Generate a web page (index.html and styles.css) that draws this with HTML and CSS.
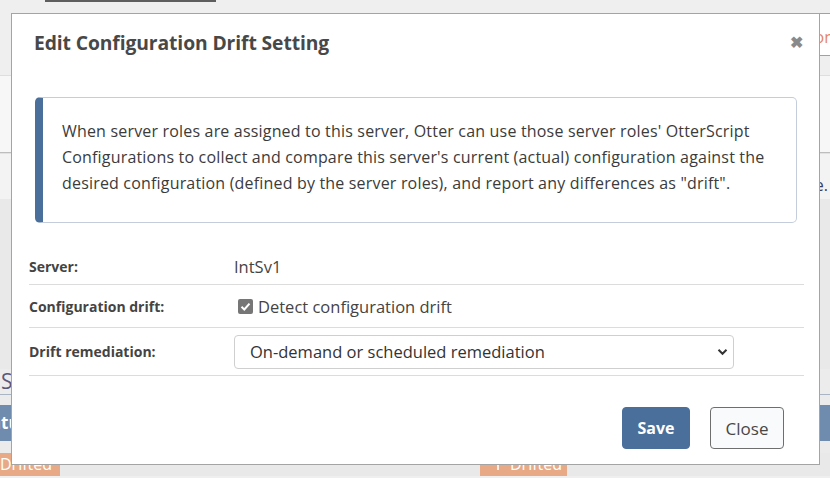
FILE: index.html
```html
<!DOCTYPE html>
<html lang="en">
<head>
<meta charset="utf-8">
<title>Edit Configuration Drift Setting</title>
<link rel="stylesheet" href="styles.css">
</head>
<body>
<div class="page">
  <div class="topbar"><span class="tabline"></span></div>
  <div class="tabs"><span class="tab">Configuration</span></div>
  <div class="band"></div>
  <div class="notice"><span>Changes were detected on this page.</span></div>
  <div class="fill"></div>
  <div class="heading"><span>Servers</span></div>
  <div class="gap"></div>
  <div class="thead"><span>Status</span></div>
  <div class="gap small"></div>
  <div class="labels">
    <span class="lbl first">Drifted</span>
    <span class="lbl second"><svg width="12" height="12" viewBox="0 0 12 12"><path d="M2 1 L6 6 L10 1 M6 6 V11" fill="none" stroke="#fff" stroke-width="1.6"/></svg> Drifted</span>
  </div>
</div>

<div class="modal">
  <div class="modal-header">
    <h2 class="modal-title">Edit Configuration Drift Setting</h2>
    <span class="close">&#x2716;</span>
  </div>
  <div class="modal-body">
    <div class="info">
      When server roles are assigned to this server, Otter can use those server roles' OtterScript Configurations to collect and compare this server's current (actual) configuration against the desired configuration (defined by the server roles), and report any differences as "drift".
    </div>
    <div class="form">
      <div class="row">
        <span class="label">Server:</span>
        <span class="value">IntSv1</span>
      </div>
      <div class="row">
        <span class="label">Configuration drift:</span>
        <span class="value check-wrap">
          <span class="checkbox"><svg width="11" height="11" viewBox="0 0 11 11"><path d="M1.5 5.8 L4.3 8.5 L9.5 2.6" fill="none" stroke="#fff" stroke-width="2"/></svg></span>
          Detect configuration drift
        </span>
      </div>
      <div class="row tall">
        <span class="label">Drift remediation:</span>
        <span class="value">
          <span class="select-wrap">
            <select class="select"><option>On-demand or scheduled remediation</option></select>
            <svg class="chev" width="11" height="8" viewBox="0 0 11 8"><path d="M1.5 1.8 L5.5 5.8 L9.5 1.8" fill="none" stroke="#333" stroke-width="2"/></svg>
          </span>
        </span>
      </div>
    </div>
    <div class="footer">
      <button class="btn primary">Save</button>
      <button class="btn secondary">Close</button>
    </div>
  </div>
</div>
</body>
</html>
```
FILE: styles.css
```css
* { box-sizing: border-box; }
html, body { margin: 0; padding: 0; }
body {
  width: 830px;
  height: 478px;
  overflow: hidden;
  background: #efefef;
  font-family: "Open Sans", "Noto Sans", sans-serif;
  color: #3a3a3a;
}
.page { display: flex; flex-direction: column; width: 830px; }
.topbar { height: 13px; }
.tabline { display: block; margin-left: 45px; width: 171px; height: 2px; background: #5e5e5e; }
.tabs {
  height: 63px;
  display: flex;
  align-items: flex-start;
  border-bottom: 1px solid #eadbd0;
  overflow: hidden;
}
.tab {
  flex-shrink: 0;
  margin-left: 718px;
  height: 43px;
  padding: 0 14px;
  background: #fff;
  border-top: 1px solid #e58a68;
  border-bottom: 1px solid #e58a68;
  color: #e5845f;
  font-size: 16px;
  line-height: 46px;
  white-space: nowrap;
}
.band { height: 77px; background: #f7f7f7; border-bottom: 1px solid #bdbdbd; }
.notice {
  height: 46px;
  background: #f3f3f3;
  border-top: 1px solid #e2e2e2;
  display: flex;
  justify-content: flex-end;
  align-items: flex-start;
  padding: 20px 2px 0 0;
  font-size: 16px;
  line-height: 22px;
  color: #3c3c5a;
  white-space: nowrap;
}
.fill { height: 170px; background: #e9e9e9; }
.heading {
  height: 26px;
  background: #ececec;
  border-bottom: 1px solid #a9b5c4;
  font-size: 21px;
  line-height: 24px;
  color: #5a5878;
  white-space: nowrap;
  overflow: hidden;
}
.heading span { display: block; margin-left: 1px; }
.gap { height: 10px; background: #ebebeb; }
.gap.small { height: 12px; }
.thead {
  height: 36px;
  background: #6f8cae;
  color: #fff;
  font-weight: 700;
  font-size: 17px;
  line-height: 36px;
  white-space: nowrap;
  overflow: hidden;
}
.thead span { display: block; margin-left: -26px; }
.labels { height: 23px; display: flex; background: #e9e9e9; white-space: nowrap; overflow: hidden; }
.lbl {
  display: inline-flex;
  align-items: center;
  gap: 6px;
  height: 23px;
  background: #e8aa86;
  color: #fff;
  font-size: 16px;
  line-height: 23px;
}
.lbl.first { width: 60px; padding-left: 0; }
.lbl.second { margin-left: 420px; width: 87px; padding-left: 12px; }

/* Modal */
.modal {
  position: fixed;
  left: 11px;
  top: 13px;
  width: 809px;
  height: 452px;
  background: #fff;
  border: 1px solid #a4a4a4;
}
.modal-header {
  height: 60px;
  display: flex;
  align-items: center;
  justify-content: space-between;
  padding: 0 16px 4px 22px;
}
.modal-title {
  margin: 0;
  font-size: 19.3px;
  font-weight: 700;
  color: #484848;
  letter-spacing: -0.1px;
}
.close { color: #8a8a8a; font-size: 16px; font-weight: 700; }
.modal-body { padding: 23px 15px 0 17px; }
.info {
  margin: 0 7px 0 6px;
  height: 126px;
  border: 1px solid #c3cddb;
  border-left: 8px solid #4a6f9a;
  border-radius: 5px;
  padding: 20px 18px 0 19px;
  font-size: 16px;
  letter-spacing: 0.18px;
  line-height: 26px;
  color: #3b3b3b;
}
.form { margin-top: 25px; }
.row {
  display: grid;
  grid-template-columns: 205px 1fr;
  align-items: center;
  height: 37px;
  border-bottom: 1px solid #dcdcdc;
}
.row + .row { height: 43px; }
.row.tall { height: 48px; }
.label { font-size: 14px; font-weight: 700; color: #444; }
.value { font-size: 16.5px; color: #444; display: flex; align-items: center; }
.check-wrap { gap: 5px; padding-left: 4px; }
.checkbox {
  width: 15px;
  height: 15px;
  border-radius: 2px;
  background: #767676;
  display: inline-flex;
  align-items: center;
  justify-content: center;
}
.select-wrap { position: relative; display: block; width: 500px; }
.select {
  appearance: none;
  -webkit-appearance: none;
  width: 500px;
  height: 34px;
  padding: 0 30px 0 15px;
  border: 1px solid #cfcfcf;
  border-radius: 4px;
  background: #fff;
  font-family: "Open Sans", "Noto Sans", sans-serif;
  font-size: 16.5px;
  color: #333;
}
.chev { position: absolute; right: 6px; top: 13px; }
.footer {
  display: flex;
  justify-content: flex-end;
  gap: 20px;
  padding: 31px 20px 0 0;
}
.btn {
  height: 42px;
  border-radius: 4px;
  font-family: "Open Sans", "Noto Sans", sans-serif;
  font-size: 16px;
  cursor: pointer;
}
.btn.primary { width: 68px; background: #4a6f9b; border: 1px solid #4a6f9b; color: #fff; font-weight: 700; }
.btn.secondary { width: 74px; background: #f9fafb; border: 1px solid #6e6e6e; color: #474747; font-size: 17px; }
```
